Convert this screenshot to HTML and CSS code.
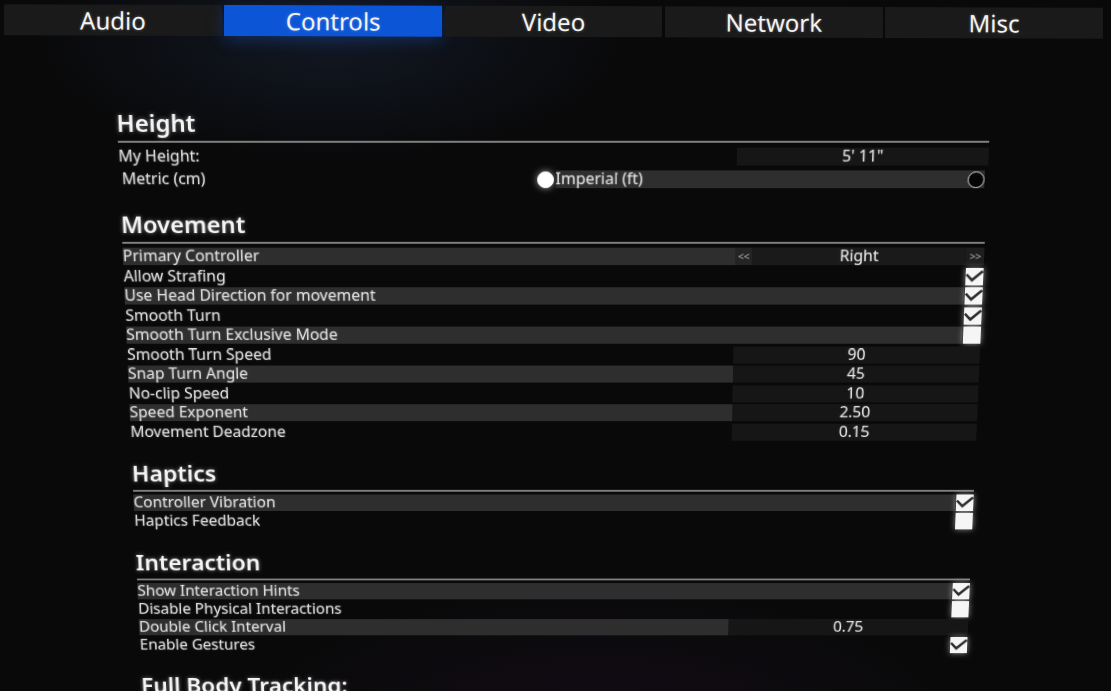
FILE: index.html
```html
<!DOCTYPE html>
<html lang="en">
<head>
<meta charset="utf-8">
<title>Settings - Controls</title>
<link rel="stylesheet" href="styles.css">
</head>
<body>
<nav class="tabs">
  <div class="tab">Audio</div>
  <div class="tab tab-active">Controls</div>
  <div class="tab">Video</div>
  <div class="tab">Network</div>
  <div class="tab">Misc</div>
</nav>

<main class="panel">
  <section class="group group-height">
    <h2 class="group-title">Height</h2>
    <div class="rule"></div>
    <div class="rows">
      <div class="row">
        <span class="label">My Height:</span>
        <span class="value">5' 11"</span>
      </div>
      <div class="row radio-row">
        <div class="option">
          <span class="label label-indent">Metric (cm)</span>
          <span class="radio radio-on"></span>
        </div>
        <div class="option option-alt">
          <span class="label">Imperial (ft)</span>
          <span class="radio"></span>
        </div>
      </div>
    </div>
  </section>

  <section class="group group-movement">
    <h2 class="group-title">Movement</h2>
    <div class="rule"></div>
    <div class="rows">
      <div class="row row-alt">
        <span class="label">Primary Controller</span>
        <span class="arrow arrow-left">&lt;&lt;</span>
        <span class="select-value">Right</span>
        <span class="arrow arrow-right">&gt;&gt;</span>
      </div>
      <div class="row">
        <span class="label">Allow Strafing</span>
        <span class="check"><svg viewBox="0 0 18 18"><path d="M1.8 7.6 L6.6 12.6 L16.4 4.2"/></svg></span>
      </div>
      <div class="row row-alt">
        <span class="label">Use Head Direction for movement</span>
        <span class="check"><svg viewBox="0 0 18 18"><path d="M1.8 7.6 L6.6 12.6 L16.4 4.2"/></svg></span>
      </div>
      <div class="row">
        <span class="label">Smooth Turn</span>
        <span class="check"><svg viewBox="0 0 18 18"><path d="M1.8 7.6 L6.6 12.6 L16.4 4.2"/></svg></span>
      </div>
      <div class="row row-alt">
        <span class="label">Smooth Turn Exclusive Mode</span>
        <span class="check"></span>
      </div>
      <div class="row">
        <span class="label">Smooth Turn Speed</span>
        <span class="value">90</span>
      </div>
      <div class="row row-alt">
        <span class="label">Snap Turn Angle</span>
        <span class="value">45</span>
      </div>
      <div class="row">
        <span class="label">No-clip Speed</span>
        <span class="value">10</span>
      </div>
      <div class="row row-alt">
        <span class="label">Speed Exponent</span>
        <span class="value">2.50</span>
      </div>
      <div class="row">
        <span class="label">Movement Deadzone</span>
        <span class="value">0.15</span>
      </div>
    </div>
  </section>

  <section class="group group-haptics">
    <h2 class="group-title">Haptics</h2>
    <div class="rule"></div>
    <div class="rows">
      <div class="row row-alt">
        <span class="label">Controller Vibration</span>
        <span class="check"><svg viewBox="0 0 18 18"><path d="M1.8 7.6 L6.6 12.6 L16.4 4.2"/></svg></span>
      </div>
      <div class="row">
        <span class="label">Haptics Feedback</span>
        <span class="check"></span>
      </div>
    </div>
  </section>

  <section class="group group-interaction">
    <h2 class="group-title">Interaction</h2>
    <div class="rule"></div>
    <div class="rows">
      <div class="row row-alt">
        <span class="label">Show Interaction Hints</span>
        <span class="check"><svg viewBox="0 0 18 18"><path d="M1.8 7.6 L6.6 12.6 L16.4 4.2"/></svg></span>
      </div>
      <div class="row">
        <span class="label">Disable Physical Interactions</span>
        <span class="check"></span>
      </div>
      <div class="row row-alt">
        <span class="label">Double Click Interval</span>
        <span class="value">0.75</span>
      </div>
      <div class="row">
        <span class="label">Enable Gestures</span>
        <span class="check"><svg viewBox="0 0 18 18"><path d="M1.8 7.6 L6.6 12.6 L16.4 4.2"/></svg></span>
      </div>
    </div>
  </section>

  <section class="group group-fbt">
    <h2 class="group-title">Full Body Tracking:</h2>
    <div class="rule"></div>
  </section>
</main>
</body>
</html>
```

FILE: styles.css
```css
html, body {
  margin: 0;
  padding: 0;
}

body {
  width: 1111px;
  height: 691px;
  overflow: hidden;
  background:
    radial-gradient(ellipse 420px 170px at 330px 40px, rgba(38, 58, 92, 0.30), rgba(38, 58, 92, 0) 70%),
    radial-gradient(ellipse 520px 220px at 600px 740px, rgba(48, 20, 52, 0.28), rgba(48, 20, 52, 0) 70%),
    #09090a;
  font-family: "Noto Sans", "Open Sans", sans-serif;
  color: #e0e0e0;
}

/* ---------- tabs ---------- */
.tabs {
  display: flex;
  gap: 2.5px;
  width: 1099px;
  margin: 6px 0 0 4px;
  transform: rotate(0.18deg);
}

.tab {
  flex: 1;
  height: 31px;
  line-height: 31px;
  text-align: center;
  background: #1a1a1a;
  font-size: 24px;
  color: #f2f2f2;
  text-shadow: 0 0 3px rgba(255, 255, 255, 0.35);
}

.tab-active {
  background: #0b55d6;
  box-shadow: 0 4px 16px rgba(30, 90, 210, 0.35);
}

/* ---------- settings panel ---------- */
.panel {
  width: 875px;
  margin: 63px 0 0 116px;
  padding-top: 9px;
  transform-origin: 50% 0;
  transform: perspective(400px) rotateX(-2.29deg);
}

.group-title {
  margin: 0 0 0 -0.5px;
  font-size: 24px;
  line-height: 28px;
  font-weight: 600;
  color: #f4f4f4;
  white-space: nowrap;
  text-shadow: 0 0 4px rgba(255, 255, 255, 0.45);
}

.rule {
  height: 2px;
  margin-top: 4px;
  background: #808080;
}

.rows {
  display: flex;
  flex-direction: column;
}

.group-height { margin-bottom: 23px; }
.group-height .rows { padding-top: 4.5px; gap: 5.5px; }

.group-movement { margin-bottom: 21.5px; }
.group-movement .rows { padding-top: 4px; gap: 2.5px; }

.group-haptics { margin-bottom: 22.5px; }
.group-haptics .rows { padding-top: 3px; gap: 1.8px; }

.group-interaction { margin-bottom: 22px; }
.group-interaction .rows { padding-top: 3px; gap: 2px; }

/* ---------- rows ---------- */
.row {
  display: flex;
  align-items: stretch;
  height: 18px;
  font-size: 16px;
}

.label {
  flex: 1;
  min-width: 0;
  line-height: 17px;
  white-space: nowrap;
  color: #dedede;
  text-shadow: 0 0 2px rgba(255, 255, 255, 0.35);
}

.label-indent {
  padding-left: 2.5px;
}

.row-alt .label {
  background: #2e2e2e;
}

.value {
  width: 253px;
  flex: none;
  background: #161616;
  text-align: center;
  line-height: 17px;
  color: #e4e4e4;
  text-shadow: 0 0 2px rgba(255, 255, 255, 0.3);
}

.arrow {
  flex: none;
  background: #242424;
  font-size: 11px;
  line-height: 18px;
  text-align: center;
  color: #b0b0b0;
  letter-spacing: -0.5px;
}

.arrow-left { width: 17px; }
.arrow-right { width: 18px; background: #1e1e1e; }

.select-value {
  width: 218px;
  flex: none;
  background: #1a1a1a;
  text-align: center;
  line-height: 17px;
  color: #e4e4e4;
  text-shadow: 0 0 2px rgba(255, 255, 255, 0.3);
}

.check {
  flex: none;
  width: 18px;
  height: 18px;
  margin-left: 1px;
  background: #f5f5f5;
  box-shadow: 0 0 6px rgba(255, 255, 255, 0.55);
}

.check svg {
  display: block;
  width: 18px;
  height: 18px;
}

.check path {
  fill: none;
  stroke: #2c2c2c;
  stroke-width: 2.6;
  stroke-linecap: square;
  stroke-linejoin: miter;
}

/* ---------- radio row ---------- */
.radio-row {
  display: grid;
  grid-template-columns: 438px 432px;
  column-gap: 1.5px;
}

.option {
  display: flex;
  align-items: center;
}

.option .label {
  align-self: stretch;
  line-height: 17.6px;
}

.option-alt {
  background: #2e2e2e;
}

.radio {
  flex: none;
  width: 17px;
  height: 17px;
  box-sizing: border-box;
  border-radius: 50%;
  border: 1.5px solid #dcdcdc;
  background: #050505;
}

.radio-on {
  background: #ffffff;
  border-color: #ffffff;
  box-shadow: 0 0 7px rgba(255, 255, 255, 0.6);
}
```
